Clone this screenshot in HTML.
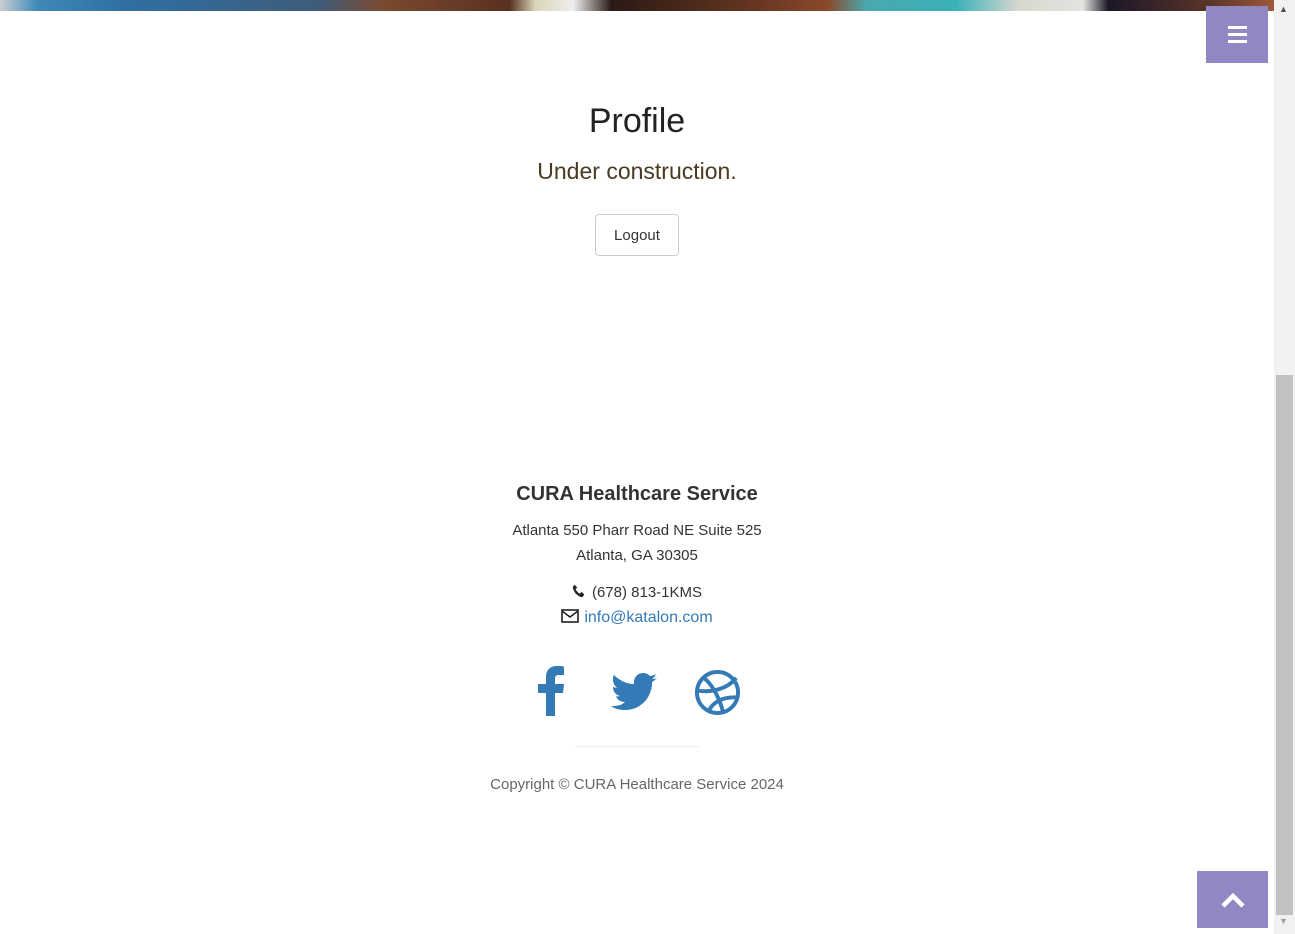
<!DOCTYPE html>
<html><head><meta charset="utf-8"><style>
body{margin:0;width:1295px;height:934px;overflow:hidden;background:#fff;font-family:"Liberation Sans",sans-serif;color:#333;position:relative}
.top{position:absolute;left:0;top:0;width:1274px;height:11px;background:linear-gradient(90deg,#c9ced2 0,#3c88b8 3%,#2f6fa3 10%,#3f5c7a 25%,#7a4a30 30%,#5a3020 40%,#d9d4b8 42%,#eee 45%,#2a1a15 48%,#6a3822 60%,#8a4a2b 65%,#4aa8b0 68%,#3ab0b8 75%,#d8d8d0 80%,#e4e4e0 85%,#1c1628 87%,#5a3528 95%,#a0583a 100%)}
.sb{position:absolute;left:1274px;top:0;width:21px;height:934px;background:#f1f1f1}
.thumb{position:absolute;left:1276px;top:375px;width:17px;height:540px;background:#c1c1c1}
.menu{position:absolute;left:1206px;top:6px;width:62px;height:57px;background:#9188c3}
.menu i{position:absolute;left:22px;width:19px;height:3px;background:#fff}
.totop{position:absolute;left:1197px;top:871px;width:71px;height:57px;background:#9188c3}
.c{position:absolute;left:0;width:1274px;text-align:center}
</style></head><body>
<div class="top"></div>
<div class="sb"></div><div class="thumb"></div>
<div style="position:absolute;left:1279px;top:4px;font-size:9px;color:#505050">▲</div>
<div style="position:absolute;left:1279px;top:916px;font-size:9px;color:#a0a0a0">▼</div>
<div class="menu"><i style="top:20px"></i><i style="top:27px"></i><i style="top:34px"></i></div>
<div class="c" style="top:102px;font-size:34px;color:#222">Profile</div>
<div class="c" style="top:158px;font-size:23px;color:#4a3a20">Under construction.</div>
<div style="position:absolute;left:595px;top:214px;width:82px;height:40px;border:1px solid #ccc;border-radius:4px;box-sizing:content-box;text-align:center;line-height:42px;font-size:15px">Logout</div>
<div class="c" style="top:483px;font-size:20px;font-weight:bold">CURA Healthcare Service</div>
<div class="c" style="top:518px;font-size:15px;line-height:25px">Atlanta 550 Pharr Road NE Suite 525<br>Atlanta, GA 30305</div>
<div class="c" style="top:584px;font-size:15px"><svg width="14" height="14" viewBox="0 0 16 16" style="vertical-align:-1px;margin-right:6px"><path d="M3 1l3 3-2 2c1 2 3 4 5 5l2-2 3 3-2 3C7 15 1 9 1 3z" fill="#222"/></svg>(678) 813-1KMS</div>
<div class="c" style="top:609px;font-size:16px;color:#337ab7"><svg width="18" height="14" viewBox="0 0 18 14" style="vertical-align:-1px;margin-right:5px"><rect x="1" y="1" width="16" height="12" fill="none" stroke="#222" stroke-width="1.6"/><path d="M1 2l8 6 8-6" fill="none" stroke="#222" stroke-width="1.6"/></svg>info@katalon.com</div>
<svg style="position:absolute;left:537px;top:666px" width="28" height="50" viewBox="0 0 28 50"><path d="M9 50V27H1v-9h8v-7C9 4 13 0 20 0c3 0 6 0 7 1v8h-5c-3 0-4 1-4 4v5h9l-1 9h-8v23z" fill="#337ab7"/></svg>
<svg style="position:absolute;left:611px;top:673px" width="46" height="40" viewBox="0 0 46 40"><path d="M46 5c-2 1-4 1-5 1 2-1 3-3 4-5-2 1-4 2-6 2-2-2-4-3-7-3-5 0-9 4-9 9v2C15 11 8 7 3 2c-1 1-1 3-1 5 0 3 2 6 4 8-1 0-3-1-4-1 0 5 3 8 7 9-1 0-2 1-4 0 1 4 5 6 9 6-3 3-7 4-12 4H0c4 3 9 4 14 4 17 0 27-14 27-27v-1c2-1 4-3 5-4z" fill="#337ab7"/></svg>
<svg style="position:absolute;left:694px;top:669px" width="47" height="47" viewBox="0 0 48 48"><g fill="none" stroke="#337ab7" stroke-width="4"><circle cx="24" cy="24" r="21"/><path d="M10 9c8 6 16 20 20 36"/><path d="M3 22c12 2 30 0 40-13"/><path d="M15 43c4-9 14-15 30-14"/></g></svg>
<div style="position:absolute;left:575px;top:746px;width:124px;height:1px;background:#eee"></div>
<div class="c" style="top:776px;font-size:15px;color:#666">Copyright © CURA Healthcare Service 2024</div>
<div class="totop"><svg style="position:absolute;left:24px;top:22px" width="24" height="16" viewBox="0 0 24 16"><path d="M2 13L12 3l10 10" fill="none" stroke="#fff" stroke-width="4.5"/></svg></div>
</body></html>
